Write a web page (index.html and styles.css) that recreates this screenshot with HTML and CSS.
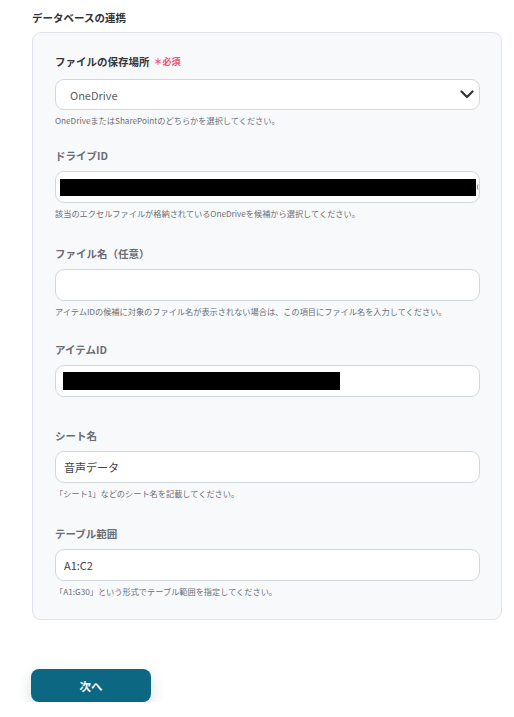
FILE: index.html
```html
<!DOCTYPE html>
<html lang="ja">
<head>
<meta charset="utf-8">
<title>データベースの連携</title>
<link rel="stylesheet" href="styles.css">
</head>
<body>
<div class="page">
  <h2 class="section-title">データベースの連携</h2>
  <div class="card">
    <div class="field field--first">
      <div class="label label--main">ファイルの保存場所<span class="req">＊必須</span></div>
      <div class="select">
        <span class="select-value">OneDrive</span>
        <svg class="chevron" width="14" height="9" viewBox="0 0 14 9"><path d="M1.5 1.5 L7 7 L12.5 1.5" fill="none" stroke="#333" stroke-width="2.2" stroke-linecap="round" stroke-linejoin="round"/></svg>
      </div>
      <div class="help">OneDriveまたはSharePointのどちらかを選択してください。</div>
    </div>

    <div class="field field--g27">
      <div class="label">ドライブID</div>
      <div class="input input--redacted">
        <span class="redact redact--wide"></span><span class="clip-glyph"></span>
      </div>
      <div class="help">該当のエクセルファイルが格納されているOneDriveを候補から選択してください。</div>
    </div>

    <div class="field field--g25">
      <div class="label">ファイル名（任意）</div>
      <div class="input"></div>
      <div class="help">アイテムIDの候補に対象のファイル名が表示されない場合は、この項目にファイル名を入力してください。</div>
    </div>

    <div class="field field--nohelp">
      <div class="label">アイテムID</div>
      <div class="input input--redacted2">
        <span class="redact redact--short"></span>
      </div>
    </div>

    <div class="field field--g27">
      <div class="label">シート名</div>
      <div class="input"><span class="value">音声データ</span></div>
      <div class="help">「シート1」などのシート名を記載してください。</div>
    </div>

    <div class="field field--last">
      <div class="label">テーブル範囲</div>
      <div class="input"><span class="value">A1:C2</span></div>
      <div class="help">「A1:G30」という形式でテーブル範囲を指定してください。</div>
    </div>
  </div>

  <div class="actions">
    <button class="btn-next" type="button">次へ</button>
  </div>
</div>
</body>
</html>
```

FILE: styles.css
```css
* { box-sizing: border-box; }
html, body { margin: 0; padding: 0; background: #fff; }
body {
  font-family: "Noto Sans CJK JP", "Noto Sans", sans-serif;
  color: #333;
}
.page {
  padding: 10px 12px 0 32px;
}
.section-title {
  margin: 0;
  height: 16px;
  font-size: 10.5px;
  line-height: 16px;
  font-weight: 700;
  color: #2f3337;
}
.card {
  margin-top: 6px;
  width: 470px;
  background: #f8f9fa;
  border: 1px solid #dfe3ea;
  border-radius: 9px;
  padding: 21px 21px 22px 22px;
  display: flex;
  flex-direction: column;
}
.field--first { padding-bottom: 22px; }
.field--g27 { padding-bottom: 27px; }
.field--g25 { padding-bottom: 25px; }
.field--nohelp { padding-bottom: 31px; }
.field--last { padding-bottom: 0; }
.label {
  display: flex;
  align-items: center;
  height: 16px;
  font-size: 10.5px;
  line-height: 16px;
  font-weight: 700;
  color: #6a6e74;
  margin-bottom: 7px;
}
.label--main {
  color: #33373b;
  margin-bottom: 9px;
}
.req {
  margin-left: 4px;
  color: #f0506e;
  font-size: 9px;
  line-height: 16px;
  font-weight: 700;
}
.select, .input {
  height: 32px;
  background: #fff;
  border: 1px solid #d3d8df;
  border-radius: 9px;
  display: flex;
  align-items: center;
}
.select {
  height: 31px;
  padding: 0 5px 0 14px;
  justify-content: space-between;
}
.select-value {
  font-size: 11px;
  color: #5a5f66;
}
.input { padding: 0 8px; }
.value {
  font-size: 11px;
  color: #3e4247;
}
.help {
  margin-top: 4px;
  height: 12px;
  font-size: 8.2px;
  line-height: 12px;
  color: #6b7077;
  white-space: nowrap;
}
.input--redacted { padding: 0 0 0 4px; }
.redact {
  display: block;
  background: #000;
}
.redact--wide { width: 416px; height: 17px; }
.redact--short { width: 277px; height: 18px; margin-left: -1px; }
.clip-glyph {
  width: 2px;
  height: 6px;
  border-left: 1.5px solid #4a90d9;
  border-radius: 3px 0 0 3px;
  margin-left: 1px;
}
.actions {
  margin-top: 49px;
}
.btn-next {
  display: block;
  width: 120px;
  height: 33px;
  border: none;
  border-radius: 8px;
  background: #0c6882;
  color: #fff;
  font-family: inherit;
  font-size: 11.5px;
  font-weight: 700;
  box-shadow: 0 6px 14px rgba(40, 60, 80, 0.18);
  margin-left: -1px;
}
```
